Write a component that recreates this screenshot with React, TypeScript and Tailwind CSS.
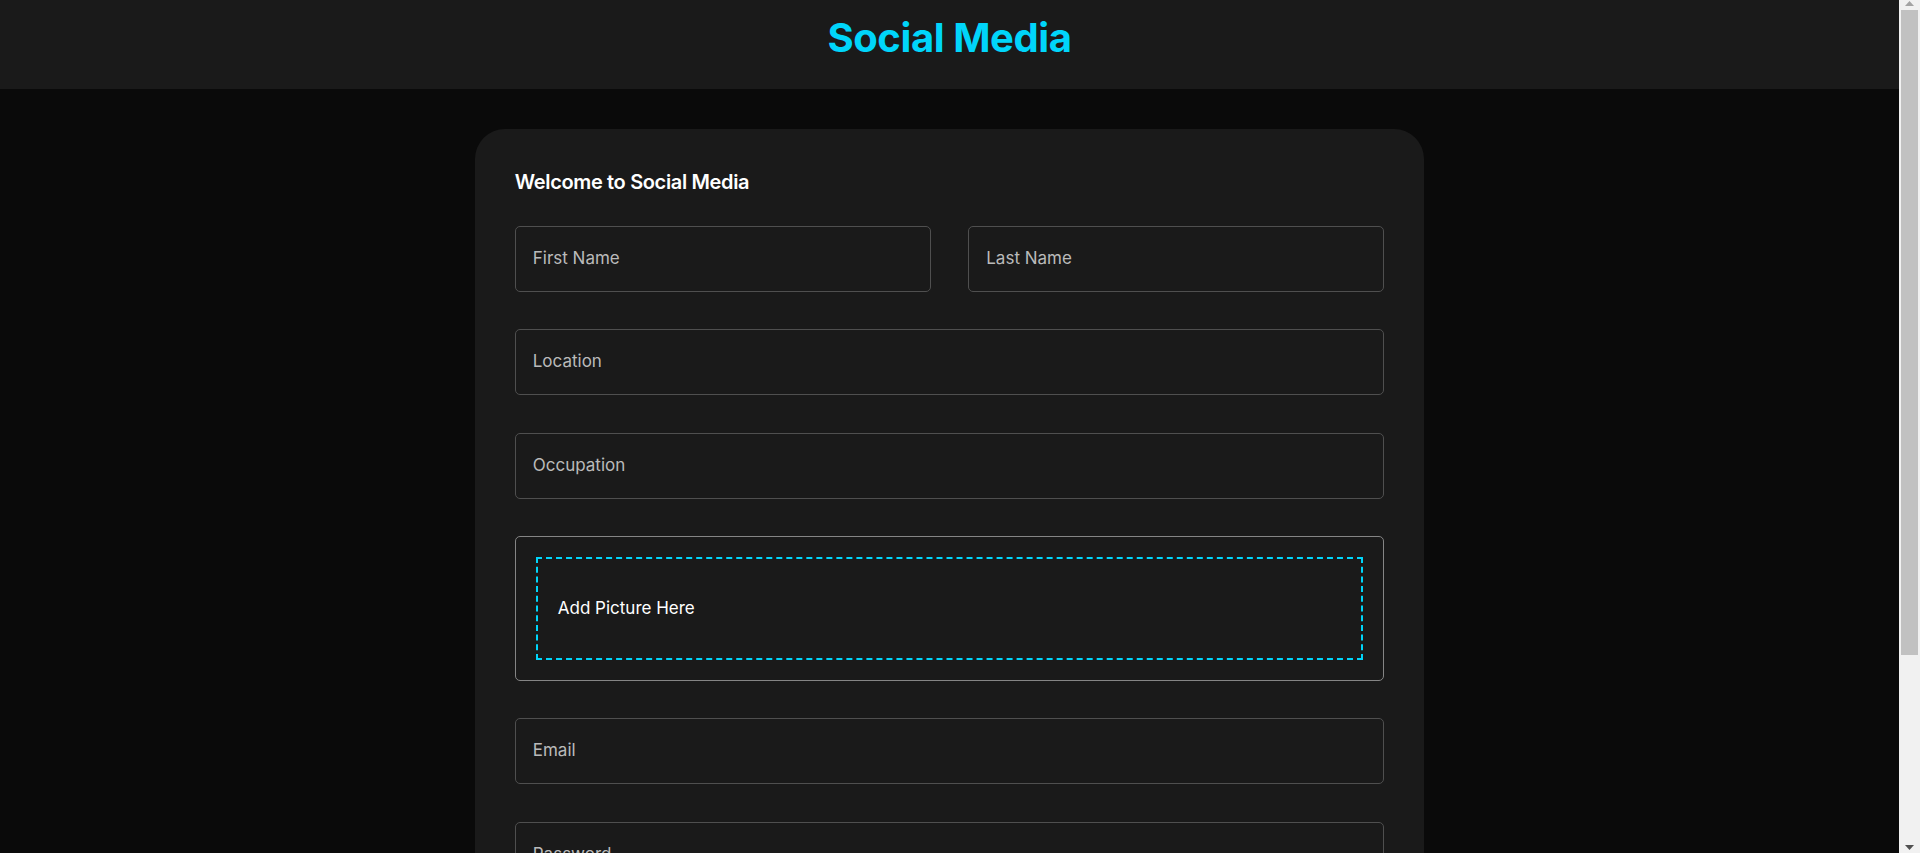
import React from 'react';

const fieldBox =
  'flex h-[66px] items-center rounded-[5px] border border-[#4f4f4f] px-[17px] text-[17px] text-[#bababa]';

const Field = ({ label, span }: { label: string; span: string }) => (
  <div className={`${span} ${fieldBox}`}>
    <span>{label}</span>
  </div>
);

// window scrollbar as it shows in the reference
const ScrollBar = () => (
  <aside className="sticky top-0 flex h-screen w-[21px] shrink-0 flex-col self-start bg-[#f1f1f1]">
    <div className="flex h-[10px] items-start justify-center pt-[1px]">
      <svg width="9" height="5" viewBox="0 0 9 5">
        <path d="M0 5 L4.5 0 L9 5 Z" fill="#a3a3a3" />
      </svg>
    </div>
    <div className="mx-[2px] h-[645px] bg-[#c1c1c1]" />
    <div className="flex flex-1 items-end justify-center pb-[3px]">
      <svg width="9" height="5" viewBox="0 0 9 5">
        <path d="M0 0 L9 0 L4.5 5 Z" fill="#505050" />
      </svg>
    </div>
  </aside>
);

export default function App() {
  return (
    <div className="flex min-h-screen bg-[#0a0a0a] font-['Inter',sans-serif] text-[#f6f6f6]">
      <div className="min-w-0 flex-1">
        <header className="h-[89px] w-full bg-[#1a1a1a] pt-[18px] text-center">
          <h1 className="text-[40px] font-bold leading-[40px] tracking-[-0.4px] text-[#00d5fa]">Social Media</h1>
        </header>

        <main className="mx-auto my-[40px] w-1/2 rounded-[30px] bg-[#1a1a1a] p-[40px]">
          <h5 className="mb-[30px] text-[20px] font-semibold leading-[26.7px] tracking-[-0.35px] text-white">
            Welcome to Social Media
          </h5>

          <form className="grid grid-cols-4 gap-[37.5px]">
            <Field label="First Name" span="col-span-2" />
            <Field label="Last Name" span="col-span-2" />
            <Field label="Location" span="col-span-4" />
            <Field label="Occupation" span="col-span-4" />

            <div className="col-span-4 rounded-[5px] border border-[#858585] p-[20px]">
              <div className="cursor-pointer border-2 border-dashed border-[#00d5fa] p-[20px]">
                <p className="my-[17px] text-[17px] leading-[24.5px] text-white">Add Picture Here</p>
              </div>
            </div>

            <Field label="Email" span="col-span-4" />
            <Field label="Password" span="col-span-4" />
          </form>

          <button
            type="button"
            className="mt-[40px] mb-[40px] w-full rounded-[5px] bg-[#00d5fa] p-[20px] text-[15px] font-medium uppercase tracking-[0.5px] text-[#1a1a1a]"
          >
            Register
          </button>
          <p className="text-[15px] text-[#00d5fa] underline">Already have an account? Login here.</p>
        </main>
      </div>
      <ScrollBar />
    </div>
  );
}
